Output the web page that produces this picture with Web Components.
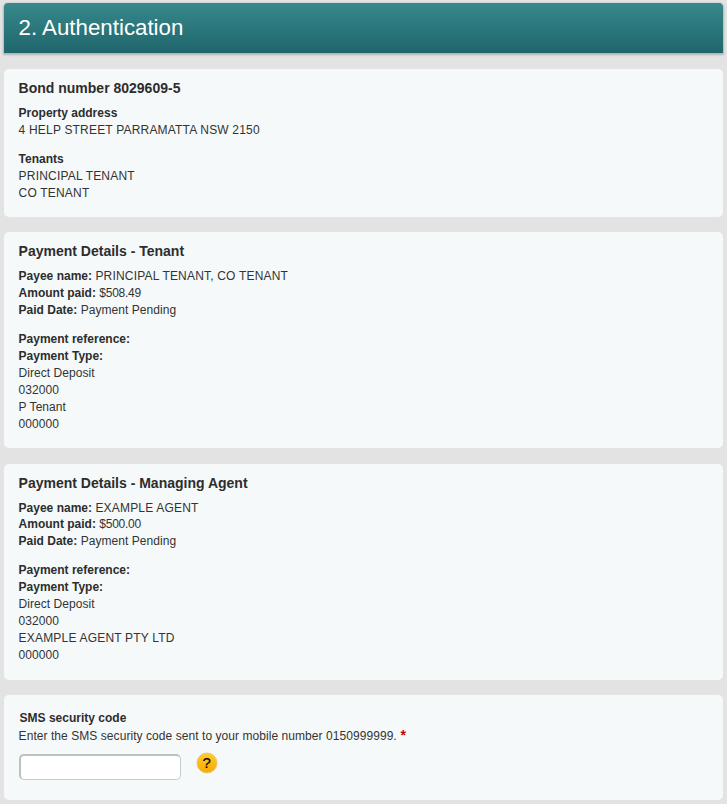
<!DOCTYPE html>
<html>
<head>
<meta charset="utf-8">
<title>Authentication</title>
<style>
  html, body { margin: 0; padding: 0; }
  body { background: #e3e3e3; font-family: "Liberation Sans", Arial, sans-serif; font-size: 12px; color: #333; }
</style>
</head>
<body>
<template id="step-page-tpl">
  <style>
    :host { display: flex; flex-direction: column; gap: 16px; padding: 3px 4px 0 4px; width: 719px; }
    .cards { display: flex; flex-direction: column; gap: 15px; }
  </style>
  <slot name="header"></slot>
  <div class="cards"><slot></slot></div>
</template>

<template id="step-header-tpl">
  <style>
    :host { display: block; height: 50px; box-sizing: border-box; padding: 0 14.5px; border-radius: 4px 4px 0 0;
      background: linear-gradient(#37888c, #1f666c); box-shadow: 0 1px 2px 1px #b3b3b3;
      color: #fff; font-size: 22.3px; line-height: 50px; }
  </style>
  <slot></slot>
</template>

<template id="info-card-tpl">
  <style>
    :host { display: block; box-sizing: border-box; background: #f5f9fa; border-radius: 5px; padding: 11px 14.6px var(--card-bottom, 15px); margin-bottom: var(--card-after, 0); color: #333; }
    h3 { margin: 0 0 7.9px; font-size: 14px; line-height: 17px; font-weight: bold; color: #2d2d2d; }
  </style>
  <h3><slot name="title"></slot></h3>
  <slot></slot>
</template>

<template id="text-block-tpl">
  <style>
    :host { display: block; margin-bottom: 12.1px; line-height: var(--lh, 17px); letter-spacing: .05px; }
    :host(:last-child) { margin-bottom: 0; }
    ::slotted(b) { color: #2d2d2d; letter-spacing: 0; }
    ::slotted(span.caps) { letter-spacing: .19px; }
    ::slotted(span.num) { letter-spacing: -.25px; }
  </style>
  <slot></slot>
</template>

<template id="sms-field-tpl">
  <style>
    :host { display: block; box-sizing: border-box; background: #f5f9fa; border-radius: 5px; height: 105px; padding: 15px 15px 0 15.6px; line-height: 17px; color: #333; }
    .label { font-weight: bold; color: #2d2d2d; margin-bottom: 1px; }
    .hint { margin-left: -1px; letter-spacing: .06px; }
    .req { color: #c00; font-weight: bold; font-size: 14px; line-height: 12px; margin-left: .4px; }
    .row { display: flex; align-items: flex-start; gap: 15px; margin-left: -1px; }
    input { box-sizing: border-box; width: 162px; height: 26px; margin: 9px 0 0; padding: 2px 6px; background: #fff;
      border: 2px solid #c6cbcc; border-top-color: #bcc1c2; border-left-color: #bcc1c2; border-right-width: 1px; border-bottom-width: 1px; border-radius: 5px; outline: none; }
    svg { display: block; }
    .help { position: relative; width: 22px; height: 22px; margin-top: 7px; }
    .help span { position: absolute; inset: 0; text-align: center; font: 15px/21px "Liberation Sans", Arial, sans-serif; -webkit-text-stroke: .2px #000; color: #000; }
  </style>
  <div class="label"><slot name="label"></slot></div>
  <div class="hint"><slot name="hint"></slot> <span class="req">*</span></div>
  <div class="row">
    <input type="text">
    <div class="help">
      <svg width="22" height="22" viewBox="0 0 22 22">
        <defs><linearGradient id="g" x1="0" y1="0" x2="0" y2="1"><stop offset="0" stop-color="#ffcb2c"/><stop offset="1" stop-color="#f7ab06"/></linearGradient></defs>
        <circle cx="11" cy="11" r="10" fill="url(#g)" stroke="#ecc565" stroke-width="1"/>
      </svg>
      <span>?</span>
    </div>
  </div>
</template>

<step-page>
  <step-header slot="header">2. Authentication</step-header>

  <info-card>
    <span slot="title">Bond number 8029609-5</span>
    <text-block><b>Property address</b><br><span class="caps">4 HELP STREET PARRAMATTA NSW 2150</span></text-block>
    <text-block><b>Tenants</b><br><span class="caps">PRINCIPAL TENANT</span><br><span class="caps">CO TENANT</span></text-block>
  </info-card>

  <info-card style="--card-after: 1px">
    <span slot="title">Payment Details - Tenant</span>
    <text-block><b>Payee name:</b> <span class="caps">PRINCIPAL TENANT, CO TENANT</span><br><b>Amount paid:</b> <span class="num">$508.49</span><br><b>Paid Date:</b> Payment Pending</text-block>
    <text-block><b>Payment reference:</b><br><b>Payment Type:</b><br>Direct Deposit<br>032000<br>P Tenant<br>000000</text-block>
  </info-card>

  <info-card style="--card-bottom: 16.2px">
    <span slot="title">Payment Details - Managing Agent</span>
    <text-block style="--lh: 16.6px"><b>Payee name:</b> <span class="caps">EXAMPLE AGENT</span><br><b>Amount paid:</b> <span class="num">$500.00</span><br><b>Paid Date:</b> Payment Pending</text-block>
    <text-block><b>Payment reference:</b><br><b>Payment Type:</b><br>Direct Deposit<br>032000<br><span class="caps">EXAMPLE AGENT PTY LTD</span><br>000000</text-block>
  </info-card>

  <sms-field>
    <span slot="label">SMS security code</span>
    <span slot="hint">Enter the SMS security code sent to your mobile number 0150999999.</span>
  </sms-field>
</step-page>

<script>
  // all elements are the same: clone the template into an open shadow root
  function define(tag) {
    customElements.define(tag, class extends HTMLElement {
      constructor() {
        super();
        this.attachShadow({ mode: 'open' });
        this.shadowRoot.appendChild(document.getElementById(tag + '-tpl').content.cloneNode(true));
      }
    });
  }
  ['step-page', 'step-header', 'info-card', 'text-block', 'sms-field'].forEach(define);
</script>
</body>
</html>
